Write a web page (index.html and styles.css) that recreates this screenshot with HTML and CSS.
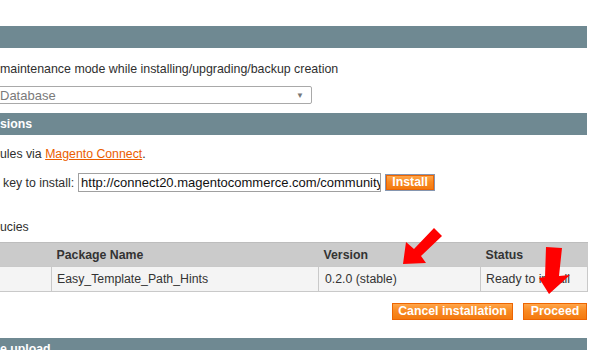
FILE: index.html
```html
<!DOCTYPE html>
<html>
<head>
<meta charset="utf-8">
<link rel="stylesheet" href="styles.css">
</head>
<body>
<div class="page">
  <div class="bar"></div>
  <p class="line first">maintenance mode while installing/upgrading/backup creation</p>
  <div class="select"><span>Database</span><span class="caret">▼</span></div>
  <div class="bar titled">sions</div>
  <p class="line via">ules via <a href="#">Magento Connect</a>.</p>
  <div class="keyrow">
    <span>key to install:</span>
    <input class="input" type="text" value="http://connect20.magentocommerce.com/community/Easy_Template_Path_Hints">
    <button class="btn install">Install</button>
  </div>
  <p class="line deps">ucies</p>
  <table class="grid">
    <colgroup><col class="c1"><col class="c2"><col class="c3"><col class="c4"></colgroup>
    <thead>
      <tr><th></th><th>Package Name</th><th>Version</th><th>Status</th></tr>
    </thead>
    <tbody>
      <tr><td></td><td>Easy_Template_Path_Hints</td><td>0.2.0 (stable)</td><td>Ready to install</td></tr>
    </tbody>
  </table>
  <div class="actions">
    <button class="btn cancel">Cancel installation</button>
    <button class="btn proceed">Proceed</button>
  </div>
  <div class="bar titled bottom">e upload</div>

  <svg class="arrows" width="600" height="350" viewBox="0 0 600 350">
    <polygon points="403,264 406,242 414,249 434,228 442,236 421,256 426,263" fill="#ff0000"/>
    <polygon points="546,247 562,248 559,276 570,275 549,294 539,278 545,277" fill="#ff0000"/>
  </svg>
</div>
</body>
</html>
```

FILE: styles.css
```css
html, body {
  margin: 0;
  padding: 0;
  background: #fff;
  overflow: hidden;
}
body {
  font-family: "Liberation Sans", Arial, sans-serif;
  font-size: 12.3px;
  color: #2f2f2f;
}
.page {
  position: relative;
  width: 587px;
  height: 350px;
  padding-top: 26px;
  box-sizing: border-box;
}
.bar {
  height: 22px;
  background: #6f8992;
  color: #fff;
  font-weight: bold;
  line-height: 22px;
}
.line {
  margin: 0;
  line-height: 15px;
}
.first {
  margin-top: 14px;
  font-size: 12.4px;
}
.select {
  margin-top: 9px;
  margin-left: -3px;
  width: 315px;
  height: 18px;
  box-sizing: border-box;
  border: 1px solid #a9a9a9;
  border-radius: 2px;
  display: flex;
  justify-content: space-between;
  align-items: center;
  padding: 0 7px 0 2px;
  color: #7a7a7a;
  font-size: 13px;
}
.caret {
  font-size: 8px;
  color: #777;
}
.titled {
  margin-top: 9px;
}
.via {
  margin-top: 12px;
}
.via a {
  color: #eb5e00;
  text-decoration: underline;
}
.keyrow {
  margin-top: 11px;
  height: 19px;
  display: flex;
  align-items: center;
}
.keyrow > span {
  margin-left: 3px;
}
.input {
  margin: 0 0 0 4px;
  width: 303px;
  height: 19px;
  box-sizing: border-box;
  border: 1px solid #a0a0a0;
  font-family: "Liberation Sans", Arial, sans-serif;
  font-size: 13px;
  color: #111;
  padding: 0 0 0 2px;
  outline: none;
  background: #fff;
}
.btn {
  font-family: "Liberation Sans", Arial, sans-serif;
  font-weight: bold;
  font-size: 12.3px;
  color: #fff;
  border: 1px solid #ed6502;
  background: linear-gradient(#ffa64a, #f98a22 45%, #f37a10);
  height: 17px;
  line-height: 15px;
  padding: 0;
  margin: 0;
}
.install {
  margin-left: 5px;
  width: 48px;
  height: 15px;
  line-height: 13px;
  box-shadow: 0 0 0 1px #8596b0;
}
.deps {
  margin-top: 28px;
}
.grid {
  margin-top: 7px;
  margin-left: -1px;
  width: 588px;
  table-layout: fixed;
  border-collapse: collapse;
}
.c1 { width: 52px; }
.c2 { width: 267px; }
.c3 { width: 162px; }
.c4 { width: 107px; }
.grid th {
  background: #cbcbcb;
  height: 23px;
  text-align: left;
  padding: 0 0 0 5px;
  color: #333;
  font-weight: bold;
  border-top: 1px solid #bdbdbd;
  border-bottom: 1px solid #c9c9c9;
}
.grid td {
  background: #f4f4f4;
  height: 24px;
  padding: 0 0 0 5px;
  border: 1px solid #c9c9c9;
  border-top: none;
  color: #333;
  white-space: nowrap;
}
.grid td:nth-child(3) { padding-left: 6px; }
.actions {
  margin-top: 11px;
  display: flex;
  justify-content: flex-end;
  gap: 10px;
}
.cancel { width: 121px; }
.proceed { width: 64px; }
.bottom {
  margin-top: 18px;
}
.arrows {
  position: absolute;
  left: 0;
  top: 0;
  pointer-events: none;
}
```
